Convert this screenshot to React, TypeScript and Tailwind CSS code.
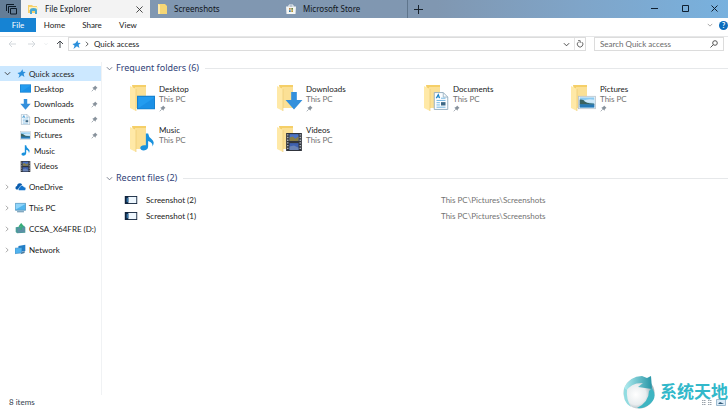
import { useState, type ReactNode } from "react";

type IconName =
  | "star"
  | "desktop"
  | "downloads"
  | "documents"
  | "pictures"
  | "music"
  | "videos"
  | "onedrive"
  | "pc"
  | "drive"
  | "network";

interface FolderItem {
  name: string;
  icon: IconName;
  pinned: boolean;
}

const FOLDERS: FolderItem[] = [
  { name: "Desktop", icon: "desktop", pinned: true },
  { name: "Downloads", icon: "downloads", pinned: true },
  { name: "Documents", icon: "documents", pinned: true },
  { name: "Pictures", icon: "pictures", pinned: true },
  { name: "Music", icon: "music", pinned: false },
  { name: "Videos", icon: "videos", pinned: false },
];

const LOCATIONS: { name: string; icon: IconName }[] = [
  { name: "OneDrive", icon: "onedrive" },
  { name: "This PC", icon: "pc" },
  { name: "CCSA_X64FRE (D:)", icon: "drive" },
  { name: "Network", icon: "network" },
];

const RECENT = [
  { name: "Screenshot (2)", path: "This PC\\Pictures\\Screenshots" },
  { name: "Screenshot (1)", path: "This PC\\Pictures\\Screenshots" },
];

function Chevron({ open, className }: { open?: boolean; className?: string }) {
  return (
    <svg viewBox="0 0 8 8" className={className} fill="none" stroke="currentColor">
      <path d={open ? "M1 2.5 4 5.5 7 2.5" : "M2.5 1 5.5 4 2.5 7"} />
    </svg>
  );
}

function Pin({ className }: { className?: string }) {
  return (
    <svg viewBox="0 0 8 8" className={className}>
      <path d="M4.6.5 7.5 3.4 6.6 3.8 5.4 5.2 5.2 6.6 1.5 3 2.9 2.7 4.3 1.4Z" fill="#87919b" />
      <path d="M.8 7.2 3.2 4.8" stroke="#87919b" strokeWidth=".8" />
    </svg>
  );
}

// Shape of each library's emblem on a 16x16 canvas
const GLYPHS: Record<IconName, ReactNode> = {
  star: (
    <path
      d="M10 .5 10.6 5 15.5 5.2 11.8 8.5 13.2 14 8.7 11.2 2.5 15.8 4.6 10.2.8 7 5.8 5.8Z"
      fill="#2b8fdb"
    />
  ),
  desktop: (
    <>
      <rect y="2" width="16" height="12" fill="#1580d0" />
      <rect x="1" y="3" width="14" height="10" fill="#239cf0" />
      <path d="M1 13 15 4V13Z" fill="#1b90e6" />
    </>
  ),
  downloads: <path d="M5.5 0H10.5V7H15.5L8 15.5.5 7H5.5Z" fill="#3490dc" />,
  documents: (
    <>
      <path d="M2 .5H10L14 4.5V15.5H2Z" fill="#fbfdff" stroke="#8fa9bc" strokeWidth=".8" />
      <path d="M10 .5V4.5H14" fill="none" stroke="#8fa9bc" strokeWidth=".7" />
      <path d="M3.7 5.5 5.6 2.2 6.8 5.5M4.4 4.4H6.5" fill="none" stroke="#1680c4" strokeWidth=".9" />
      <path d="M4 7.5H12M4 9.5H7M4 11.5H7M4 13.5H12M8 5.5H12" stroke="#63afe0" strokeWidth=".8" />
      <path d="M8 9H12V12H8Z" fill="#3d6886" />
    </>
  ),
  pictures: (
    <>
      <rect x=".5" y="2.5" width="15" height="11" fill="#f5f8fa" stroke="#b4c1cb" strokeWidth=".7" />
      <rect x="1.5" y="3.5" width="13" height="9" fill="#8bcaf1" />
      <path d="M1.5 5.5Q4.5 5 7 7.6L10 8.6 14.5 9V10H1.5Z" fill="#3a625f" />
      <path d="M5 6.5Q8 4.5 14.5 5.5V8.5L8 8Z" fill="#cfe9f8" />
      <path d="M1.5 9.6 14.5 9.8V12.5H1.5Z" fill="#2679b6" />
    </>
  ),
  music: (
    <path
      d="M7 .5H9Q9.4 3.6 12 5.4 15.5 8.2 12.8 12 13.5 8.5 9 7V12Q8.8 15.3 5.2 15.5 2 15.4 2 13.2 2.4 10.8 5.4 10.8H7Z"
      fill="#1991dd"
    />
  ),
  videos: (
    <>
      <path d="M1 0H15V16H1Z" fill="#30343c" />
      <path d="M2.5 1V15M13.5 1V15" stroke="#d8dde3" strokeDasharray="1.2 1.2" />
      <path d="M4 1H12V7H4Z" fill="#4b73c5" />
      <path d="M4 9H12V15H4Z" fill="#3e61b0" />
      <path d="M4 4 7 3 9 5 12 3V7H4Z" fill="#877d46" />
      <path d="M4 12 8 11 12 13V15H4Z" fill="#6a83b5" />
    </>
  ),
  onedrive: (
    <>
      <path d="M1 11.5Q-.2 8 3 7.3 3.3 3.2 7 3.2 9.3 3.2 10.4 5.3L5 12.5H2Z" fill="#0a5cad" />
      <path
        d="M6.5 13.8Q4.6 13.4 4.7 11.6 5 9.9 6.7 9.8 7 6.8 9.7 6.4 12 6.3 12.8 8.5 15.4 8.7 15.9 11.3 15.8 13.6 13.8 13.8Z"
        fill="#1474cd"
        stroke="#fff"
        strokeWidth=".7"
      />
    </>
  ),
  pc: (
    <>
      <path d="M.5 2H15.5V12H.5Z" fill="#52b6ee" stroke="#4d87ad" />
      <path d="M1 11 15 3V2.5H1Z" fill="#90d5fa" />
      <path d="M3 14.2H13" stroke="#5b8cab" strokeWidth="1.5" />
    </>
  ),
  drive: (
    <>
      <path d="M1 6 13 4 15 6V14L3 15 1 13Z" fill="#4a9c98" />
      <path d="M4 8 14 7V13L4 14Z" fill="#5d8fa6" />
      <path d="M9 10V2M6 5.5 9 1.5 12 5.5" stroke="#36ad78" strokeWidth="2" fill="none" />
    </>
  ),
  network: (
    <>
      <path d="M5 3 15 1V10L5 12Z" fill="#237ec7" />
      <path d="M0 6 10 5V13L0 14Z" fill="#51b3ef" stroke="#3276a8" strokeWidth=".6" />
      <path d="M10 12 14 10V13L8 15Z" fill="#49789c" />
    </>
  ),
};

function Glyph({ name, className }: { name: IconName; className?: string }) {
  return (
    <svg viewBox="0 0 16 16" className={className}>
      {GLYPHS[name]}
    </svg>
  );
}

function FolderIcon({ name }: { name: IconName }) {
  const wide = name === "desktop" || name === "pictures";
  return (
    <svg viewBox="0 0 26 28" className="h-7 w-[26px] shrink-0">
      <path d="M2 1H16V24H6Z" fill="#f5cf68" />
      <path d="M5 3H16V24H5Z" fill="#fbe095" />
      <path d="M0 2 6 5V27L0 24Z" fill="#ffe9a7" />
      <path d="M6 5V27" stroke="#eac76b" strokeWidth=".6" />
      <svg x={wide ? 7 : 8} y={wide ? 9 : 8} width={18} height={wide ? 19 : 18} viewBox="0 0 16 16">
        {GLYPHS[name]}
      </svg>
    </svg>
  );
}

function TitleBar() {
  return (
    <header className="flex h-[18px] items-stretch bg-linear-to-r from-[#8097b1] from-60% via-[#7fa5c9] via-80% to-[#78b1de] font-['Noto_Sans',sans-serif] text-[8px] text-[#10151b]">
      <button aria-label="Tabs set aside" className="flex w-[21px] items-center justify-center bg-[#647d97]">
        <svg viewBox="0 0 12 12" className="size-3" fill="none" stroke="#0d1b29">
          <path d="M1.5 8V1.5H9" />
          <path d="M3.5 10V3.5H11" />
          <path d="M5.5 5.5H11.5V11H5.5Z" />
        </svg>
      </button>
      <div className="flex w-[129px] items-center bg-[#f3f3f3] pr-[7px] pl-[7px]">
        <svg viewBox="0 0 10 10" className="size-2.5">
          <path d="M0 1H4L5 2H9V9H0Z" fill="#f6d06c" />
          <path d="M1 3H10V6H1Z" fill="#fff1bb" />
          <path d="M2 10V6Q2 4 5.5 4T9 6V10H7V7H4V10Z" fill="#4aa9d3" />
        </svg>
        <button className="ml-[7px] flex-1 text-left">File Explorer</button>
        <button aria-label="Close tab">
          <svg viewBox="0 0 8 8" className="size-[7px]" stroke="#333">
            <path d="M.5.5 7.5 7.5M7.5.5.5 7.5" />
          </svg>
        </button>
      </div>
      <button className="flex w-[129px] items-center pl-2">
        <svg viewBox="0 0 9 10" className="h-2.5 w-[9px]">
          <path d="M0 0H7L9 2V10H0Z" fill="#f5d675" />
          <path d="M0 0 2 1V10H0Z" fill="#ffeaa9" />
        </svg>
        <span className="ml-[7px]">Screenshots</span>
      </button>
      <button className="flex w-[129px] items-center border-r border-[#5f758c] pl-[7px]">
        <svg viewBox="0 0 10 10" className="size-2.5">
          <path d="M3 3V1H7V3" fill="none" stroke="#eef1f4" />
          <path d="M0 2.5H10L9.5 10H.5Z" fill="#f5f6f3" />
          <path d="M3 4H4.7V5.7H3Z" fill="#b9854b" />
          <path d="M5.3 4H7V5.7H5.3Z" fill="#71833c" />
          <path d="M3 6.3H4.7V8H3Z" fill="#38759d" />
          <path d="M5.3 6.3H7V8H5.3Z" fill="#b39434" />
        </svg>
        <span className="ml-[7px]">Microsoft Store</span>
      </button>
      <button aria-label="New tab" className="flex w-[21px] items-center justify-center">
        <svg viewBox="0 0 9 9" className="size-[9px]" stroke="#19232d">
          <path d="M4.5 0V9M0 4.5H9" />
        </svg>
      </button>
      <div className="ml-auto flex items-center pb-0.5">
        <button aria-label="Minimize" className="flex w-[31px] justify-center">
          <svg viewBox="0 0 7 7" className="size-[7px]" stroke="#102030">
            <path d="M0 3.5H7" />
          </svg>
        </button>
        <button aria-label="Maximize" className="flex w-[31px] justify-center">
          <svg viewBox="0 0 7 7" className="size-[7px]" stroke="#102030" fill="none">
            <path d="M.5.5H6.5V6.5H.5Z" />
          </svg>
        </button>
        <button aria-label="Close" className="flex w-[27px] justify-center">
          <svg viewBox="0 0 7 7" className="size-[7px]" stroke="#102030">
            <path d="M.5.5 6.5 6.5M6.5.5.5 6.5" />
          </svg>
        </button>
      </div>
    </header>
  );
}

function Ribbon() {
  return (
    <nav className="flex h-[19px] items-start border-b border-[#e6e7e8] text-[8px]">
      <button className="h-[14px] w-9 bg-[#1683d3] leading-[14px] text-white">File</button>
      <button className="h-[14px] w-[37px] leading-[14px]">Home</button>
      <button className="h-[14px] w-[38px] leading-[14px]">Share</button>
      <button className="h-[14px] w-[34px] leading-[14px]">View</button>
      <button aria-label="Expand the ribbon" className="ml-auto flex h-[14px] items-center text-[#8b8b8b]">
        <Chevron open className="size-1.5" />
      </button>
      <button
        aria-label="Help"
        className="mt-[3px] ml-[6px] size-[9px] rounded-full bg-[#0b6dbd] text-[7px] leading-[9px] font-bold text-white"
      >
        ?
      </button>
    </nav>
  );
}

function AddressBar() {
  return (
    <div className="flex h-[14px] items-center text-[8px]">
      <button aria-label="Back" className="ml-2">
        <svg viewBox="0 0 8 8" className="size-2" fill="none" stroke="#d3d8dc">
          <path d="M8 4H1M4 1 1 4 4 7" />
        </svg>
      </button>
      <button aria-label="Forward" className="ml-3">
        <svg viewBox="0 0 8 8" className="size-2" fill="none" stroke="#d3d8dc">
          <path d="M0 4H7M4 1 7 4 4 7" />
        </svg>
      </button>
      <button aria-label="Recent locations" className="ml-2 text-[#d3d8dc]">
        <Chevron open className="size-1" />
      </button>
      <button aria-label="Up" className="ml-2">
        <svg viewBox="0 0 8 8" className="size-2" fill="none" stroke="#45494e">
          <path d="M4 8V1M1 4 4 1 7 4" />
        </svg>
      </button>
      <div className="ml-1 flex h-full flex-1 items-center border border-[#dcdcdc]">
        <Glyph name="star" className="ml-[3px] size-[9px]" />
        <Chevron className="ml-[3px] size-1.5 text-[#333]" />
        <span className="ml-1 flex-1">Quick access</span>
        <button aria-label="Previous locations" className="mr-1">
          <Chevron open className="size-[7px] text-[#333]" />
        </button>
        <button
          aria-label="Refresh"
          className="flex h-full w-[11px] items-center justify-center border-l border-[#e4e4e4]"
        >
          <svg viewBox="0 0 8 8" className="size-2" fill="none" stroke="#444" strokeWidth=".8">
            <path d="M5.8 2A2.8 2.8 0 1 1 2.4 2M2 .7H4.2V2.9" />
          </svg>
        </button>
      </div>
      <label className="mr-1 ml-2 flex h-full w-[130px] items-center border border-[#dcdcdc] pr-[5px] pl-[5px]">
        <input
          type="search"
          aria-label="Search Quick access"
          placeholder="Search Quick access"
          className="w-full min-w-0 bg-transparent outline-none placeholder:text-[#686868]"
        />
        <svg viewBox="0 0 8 8" className="size-2 shrink-0" fill="none" stroke="#444" strokeWidth=".9">
          <circle cx="5" cy="3" r="2.3" />
          <path d="M3.3 4.7.5 7.5" />
        </svg>
      </label>
    </div>
  );
}

function Sidebar() {
  return (
    <aside className="w-[102px] shrink-0 border-r border-[#f0f2f4] pt-1 text-[8px] whitespace-nowrap">
      <button className="flex h-[15px] w-full items-center bg-[#cce8ff] pl-1">
        <Chevron open className="size-[7px] text-[#333]" />
        <Glyph name="star" className="ml-1.5 size-[9px]" />
        <span className="ml-[3px]">Quick access</span>
      </button>
      <ul className="grid h-[93px] grid-rows-6">
        {FOLDERS.map((folder) => (
          <li key={folder.name} className="flex items-center pr-[3px] pl-5">
            <Glyph name={folder.icon} className="size-[11px]" />
            <a href="#" className="ml-[3px] flex-1">
              {folder.name}
            </a>
            {folder.pinned && <Pin className="size-[7px]" />}
          </li>
        ))}
      </ul>
      <ul className="mt-0.5">
        {LOCATIONS.map((place) => (
          <li key={place.name} className="flex h-[21px] items-center pl-1">
            <Chevron className="size-1.5 text-[#8d8d8d]" />
            <Glyph name={place.icon} className="ml-[5px] size-[11px]" />
            <a href="#" className="ml-[3px]">
              {place.name}
            </a>
          </li>
        ))}
      </ul>
    </aside>
  );
}

interface SectionProps {
  title: string;
  children: ReactNode;
}

function Section({ title, children }: SectionProps) {
  const [open, setOpen] = useState(true);

  return (
    <section>
      <h2 className="flex items-center font-['Noto_Sans',sans-serif] text-[9px] leading-3 text-[#303f78]">
        <button onClick={() => setOpen(!open)} className="flex items-center" aria-expanded={open}>
          <Chevron open={open} className="mr-[3px] size-[7px] text-[#6e7584]" />
          {title}
        </button>
        <span className="ml-1.5 h-px flex-1 bg-[#e6e8ea]" />
      </h2>
      {open && children}
    </section>
  );
}

function Content() {
  return (
    <main className="min-w-0 flex-1 pl-1">
      <Section title="Frequent folders (6)">
        <ul className="mt-2 grid grid-cols-[repeat(auto-fill,147px)] pl-6 text-[8px] leading-[10px]">
          {FOLDERS.map((folder) => (
            <li key={folder.name} className="flex h-[41px] pt-0.5">
              <FolderIcon name={folder.icon} />
              <div className="ml-[3px]">
                <a href="#" className="block">
                  {folder.name}
                </a>
                <p className="text-[#727272]">This PC</p>
                {folder.pinned && <Pin className="mt-px size-[7px]" />}
              </div>
            </li>
          ))}
        </ul>
      </Section>
      <div className="h-2" />
      <Section title="Recent files (2)">
        <table className="mt-2 ml-[18px] text-[8px]">
          <tbody>
            {RECENT.map((file) => (
              <tr key={file.name} className="h-4">
                <td className="w-[22px]">
                  <svg viewBox="0 0 14 9" className="h-2 w-[14px]">
                    <path d="M0 0H14V9H0Z" fill="#10233c" />
                    <path d="M4 1H13V8H4Z" fill="#eef7fe" />
                    <path d="M2 2H4V7H2Z" fill="#3372a5" />
                  </svg>
                </td>
                <td className="w-[295px]">
                  <a href="#">{file.name}</a>
                </td>
                <td className="text-[#727272]">{file.path}</td>
              </tr>
            ))}
          </tbody>
        </table>
      </Section>
    </main>
  );
}

function StatusBar() {
  return (
    <footer className="flex h-[14px] items-center pl-[9px] text-[8px] text-[#33404e]">
      <span>8 items</span>
      <div className="mr-0.5 ml-auto flex gap-1">
        <button aria-label="Details view">
          <svg viewBox="0 0 10 7" className="h-[7px] w-2.5" stroke="#9aa3ab">
            <path d="M0 1.5H4M6 1.5H10M0 3.5H4M6 3.5H10M0 5.5H4M6 5.5H10" strokeDasharray="1.5 .5" />
          </svg>
        </button>
        <button aria-label="Large icons view">
          <svg viewBox="0 0 10 7" className="h-[7px] w-2.5">
            <path d="M.5.5H9.5V6.5H.5Z" fill="#d9eaf7" stroke="#9dbbd0" />
            <path d="M2 5 4 3 8 5Z" fill="#315a78" />
          </svg>
        </button>
      </div>
    </footer>
  );
}

function Watermark() {
  return (
    <div className="pointer-events-none absolute right-0 bottom-0 flex items-center gap-1">
      <svg viewBox="0 0 34 34" className="size-[34px]">
        <defs>
          <radialGradient id="globe" cx=".4" cy=".55">
            <stop offset="0" stopColor="#fff" />
            <stop offset=".65" stopColor="#e9edef" />
            <stop offset="1" stopColor="#a4b5bc" />
          </radialGradient>
          <linearGradient id="swoosh">
            <stop offset="0" stopColor="#b4eef1" />
            <stop offset="1" stopColor="#2695a6" />
          </linearGradient>
        </defs>
        <circle cx="17" cy="18" r="15.5" fill="url(#globe)" />
        <path d="M2 13Q8 1 20 1L25 3 29 1 30 14 16 12 21 8Q10 7 3 17Z" fill="url(#swoosh)" />
        <path d="M30 13Q36 22 28 29 22 34 15 33 27 27 27 16Z" fill="#3eb5c2" />
        <path d="M2 13Q0 27 9 32 4 24 5 15Z" fill="#91dce1" />
      </svg>
      <span className="pb-0.5 font-['Noto_Sans_CJK_SC',sans-serif] text-[17px] leading-8 font-bold text-[#32b8ca]">
        系统天地
      </span>
    </div>
  );
}

export default function App() {
  return (
    <div className="relative flex min-h-screen flex-col overflow-hidden bg-white font-['Lato',sans-serif] text-[#202020]">
      <TitleBar />
      <Ribbon />
      <AddressBar />
      <div className="flex flex-1 pt-[11px]">
        <Sidebar />
        <Content />
      </div>
      <StatusBar />
      <Watermark />
    </div>
  );
}
